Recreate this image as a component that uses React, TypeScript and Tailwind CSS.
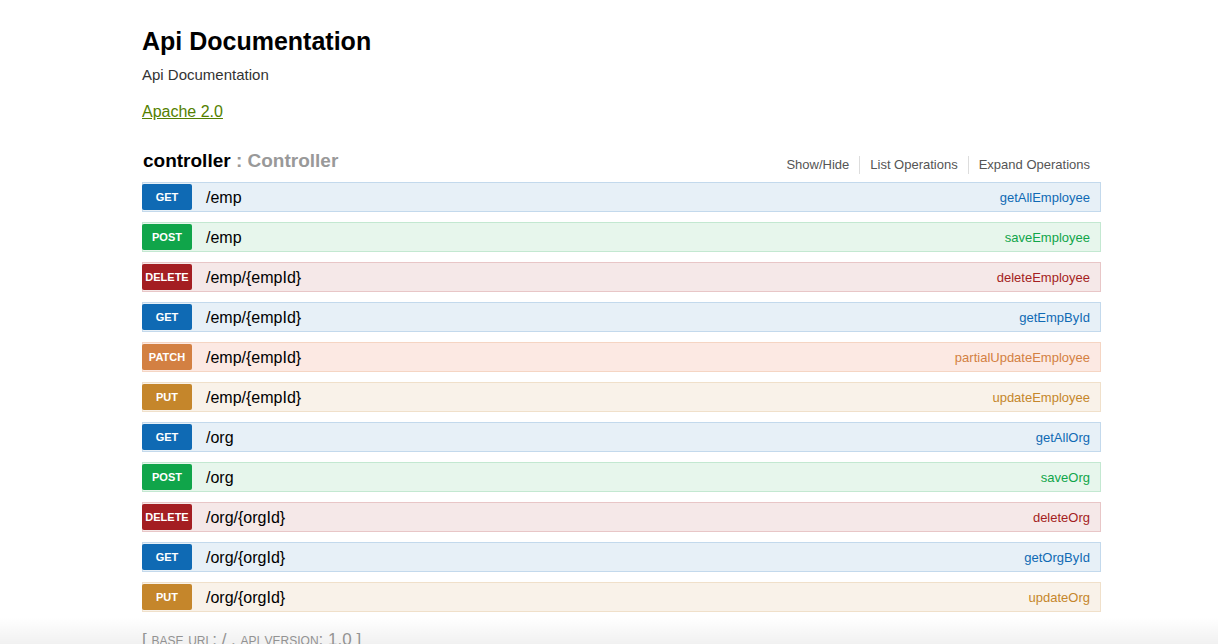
import React from 'react';

type Method = 'get' | 'post' | 'delete' | 'patch' | 'put';

const OPS: { method: Method; path: string; nickname: string }[] = [
  { method: 'get', path: '/emp', nickname: 'getAllEmployee' },
  { method: 'post', path: '/emp', nickname: 'saveEmployee' },
  { method: 'delete', path: '/emp/{empId}', nickname: 'deleteEmployee' },
  { method: 'get', path: '/emp/{empId}', nickname: 'getEmpById' },
  { method: 'patch', path: '/emp/{empId}', nickname: 'partialUpdateEmployee' },
  { method: 'put', path: '/emp/{empId}', nickname: 'updateEmployee' },
  { method: 'get', path: '/org', nickname: 'getAllOrg' },
  { method: 'post', path: '/org', nickname: 'saveOrg' },
  { method: 'delete', path: '/org/{orgId}', nickname: 'deleteOrg' },
  { method: 'get', path: '/org/{orgId}', nickname: 'getOrgById' },
  { method: 'put', path: '/org/{orgId}', nickname: 'updateOrg' },
];

// swagger-ui 2.x palette
const STYLES: Record<Method, { row: string; badge: string; nick: string }> = {
  get: { row: 'bg-[#e7f0f7] border-[#c3d9ec]', badge: 'bg-[#0f6ab4]', nick: 'text-[#0f6ab4]' },
  post: { row: 'bg-[#e7f6ec] border-[#c3e8d1]', badge: 'bg-[#10a54a]', nick: 'text-[#10a54a]' },
  delete: { row: 'bg-[#f5e8e8] border-[#e8c6c7]', badge: 'bg-[#a41e22]', nick: 'text-[#a41e22]' },
  patch: { row: 'bg-[#fce9e3] border-[#f5d5c3]', badge: 'bg-[#d38042]', nick: 'text-[#d38042]' },
  put: { row: 'bg-[#f9f2e9] border-[#f0e0ca]', badge: 'bg-[#c5862b]', nick: 'text-[#c5862b]' },
};

function Operation({ method, path, nickname }: { method: Method; path: string; nickname: string }) {
  const s = STYLES[method];
  return (
    <li className={`flex items-stretch h-[30px] border ${s.row}`}>
      <span
        className={`w-[50px] -ml-px my-px pt-px rounded-[2px] flex items-center justify-center text-[11px] font-bold uppercase text-white ${s.badge}`}
      >
        {method}
      </span>
      <span className="pl-[14px] pt-px flex items-center text-[16px] text-black">{path}</span>
      <span className={`ml-auto pr-[10px] pt-px flex items-center text-[13px] ${s.nick}`}>{nickname}</span>
    </li>
  );
}

export default function App() {
  return (
    <div className="relative min-h-[644px] bg-white font-['Liberation_Sans',Arial,sans-serif] overflow-hidden">
      <div className="ml-[142px] w-[959px] pt-[26px]">
        <h1 className="text-[25px] leading-[30px] font-bold text-black">Api Documentation</h1>
        <p className="mt-[9px] text-[15px] leading-[20px] text-[#333]">Api Documentation</p>
        <p className="mt-[17px] text-[16px] leading-[20px]">
          <a href="#" className="text-[#547f00] underline">Apache 2.0</a>
        </p>

        <div className="mt-[27px] flex items-end justify-between">
          <h2 className="text-[19px] leading-[24px] font-bold text-black pl-px">
            controller <span className="text-[#999]">: Controller</span>
          </h2>
          <ul className="flex items-center text-[13px] text-[#555] pr-[11px] -mb-[1px]">
            <li className="pr-[10px] border-r border-[#ddd] leading-[18px]">Show/Hide</li>
            <li className="px-[10px] border-r border-[#ddd] leading-[18px]">List Operations</li>
            <li className="pl-[10px] leading-[18px]">Expand Operations</li>
          </ul>
        </div>

        <ul className="mt-[9px] flex flex-col gap-[10px]">
          {OPS.map((op, i) => (
            <Operation key={i} {...op} />
          ))}
        </ul>

        <h4 className="mt-[17px] text-[17px] leading-[22px] text-[#999] [font-variant:small-caps]">
          [ base url: / , api version: 1.0 ]
        </h4>
      </div>
      <div className="pointer-events-none absolute inset-x-0 bottom-0 h-[34px] bg-gradient-to-b from-white/0 to-black/[0.07]" />
    </div>
  );
}
